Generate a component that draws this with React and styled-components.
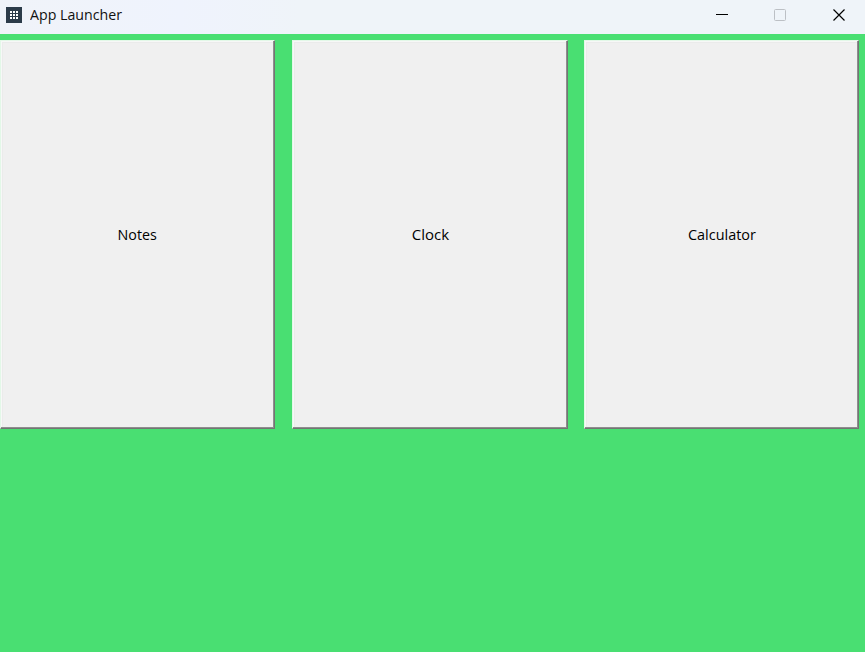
import React from 'react';
import styled, { createGlobalStyle } from 'styled-components';

const GlobalStyle = createGlobalStyle`
  * { box-sizing: border-box; }
  body { margin: 0; overflow: hidden; }
`;
const Window = styled.div`
  display: flex;
  flex-direction: column;
  height: 100vh;
  background: #49df72;
  font-family: "Open Sans", "Noto Sans", sans-serif;
`;
const TitleBar = styled.header`
  display: flex;
  align-items: center;
  height: 34px;
  flex: none;
  padding: 0 0 4px 6px;
  background: linear-gradient(90deg, #f0f3f9 0, #eff3fd 180px, #eff4f9 300px);
`;
const Title = styled.h1`
  flex: 1;
  margin: 0 0 0 8px;
  font-size: 14px;
  line-height: 20px;
  font-weight: 400;
  color: #111;
`;
const Label = styled.span`
  display: inline-block;
  transform: scaleX(${(p) => p.$scale});
  transform-origin: ${(p) => p.$origin || 'center'};
`;
const Control = styled.button`
  display: grid;
  place-items: center;
  width: 58px;
  height: 30px;
  padding: 0;
  border: 0;
  background: transparent;
  color: ${(p) => (p.disabled ? '#bcc0c5' : '#000')};
`;
const Controls = styled.div`
  display: flex;
  margin-right: -4px;

  ${Control}:last-child { width: 60px; }
`;
const Launcher = styled.main`
  display: grid;
  grid-template-columns: 275px 276px 275px;
  column-gap: 17px;
  padding-top: 6px;

  > :last-child { margin-left: -1px; margin-right: 1px; width: 275px; }
`;
const AppButton = styled.button`
  height: 389px;
  padding: 0 0 1px;
  border: 1px solid;
  border-color: #e3f8e8 #747474 #747474 #e3f8e8;
  background: #f0f0f0;
  box-shadow: inset -1px -1px #8e8e8e, inset 1px 1px #f7f8f7, inset 2px 2px #ebebeb;
  color: #000;
  font: 14px "Open Sans", "Noto Sans", sans-serif;
`;

const apps = [
  { name: 'Notes', scale: 1.02 },
  { name: 'Clock', scale: 1.07 },
  { name: 'Calculator', scale: 1.03 },
];

export default function App() {
  return (
    <Window>
      <GlobalStyle />
      <TitleBar>
        <svg width="16" height="16" viewBox="0 0 16 16">
          <path fill="#2c3b49" d="M0 0h16v16H0z" />
          {[4, 7, 10].map((y) => [4, 7, 10].map((x) => <rect key={`${x}-${y}`} x={x} y={y} width="2" height="2" fill="#fff" />))}
        </svg>
        <Title><Label $scale={1.014} $origin="left">App Launcher</Label></Title>
        <Controls>
          <Control aria-label="Minimize"><svg width="12" height="12"><path d="M0 5.5h12" stroke="currentColor" /></svg></Control>
          <Control aria-label="Maximize" disabled><svg width="12" height="12"><rect x=".5" y=".5" width="11" height="11" rx="1" fill="none" stroke="currentColor" /></svg></Control>
          <Control aria-label="Close"><svg width="12" height="12"><path d="m.5.5 11 11m0-11-11 11" stroke="currentColor" strokeWidth="1.2" /></svg></Control>
        </Controls>
      </TitleBar>
      <Launcher>
        {apps.map(({ name, scale }) => (
          <AppButton key={name}><Label $scale={scale}>{name}</Label></AppButton>
        ))}
      </Launcher>
    </Window>
  );
}
